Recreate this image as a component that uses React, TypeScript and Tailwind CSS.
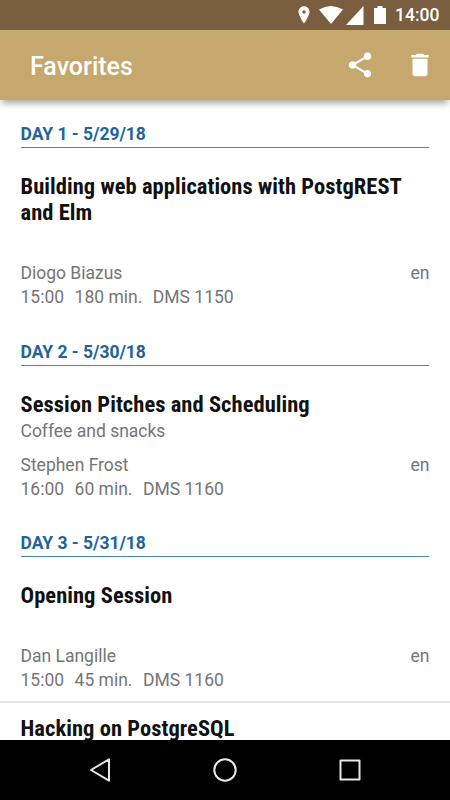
import React from 'react';

interface Session {
    title: string;
    subtitle?: string;
    speaker: string;
    time: string;
    duration: string;
    room: string;
    lang: string;
}

interface Day {
    label: string;
    sessions: Session[];
}

const days: Day[] = [
    {
        label: 'DAY 1 - 5/29/18',
        sessions: [
            {
                title: 'Building web applications with PostgREST and Elm',
                speaker: 'Diogo Biazus',
                time: '15:00',
                duration: '180 min.',
                room: 'DMS 1150',
                lang: 'en',
            },
        ],
    },
    {
        label: 'DAY 2 - 5/30/18',
        sessions: [
            {
                title: 'Session Pitches and Scheduling',
                subtitle: 'Coffee and snacks',
                speaker: 'Stephen Frost',
                time: '16:00',
                duration: '60 min.',
                room: 'DMS 1160',
                lang: 'en',
            },
        ],
    },
    {
        label: 'DAY 3 - 5/31/18',
        sessions: [
            {
                title: 'Opening Session',
                speaker: 'Dan Langille',
                time: '15:00',
                duration: '45 min.',
                room: 'DMS 1160',
                lang: 'en',
            },
        ],
    },
];

const nextTitle = 'Hacking on PostgreSQL';

const StatusBar: React.FC = () => (
    <div className="h-[30px] shrink-0 bg-[#7b5d3f] flex items-center justify-end pr-[10.500px] text-white">
        <svg className="w-[12px] h-[18px] mr-[9px]" viewBox="0 0 12 18" fill="currentColor">
            <path fillRule="evenodd" d="M6 .3C2.900.3.500 2.700.500 5.800.500 10 6 17.600 6 17.600S11.500 10 11.500 5.800C11.500 2.700 9.100.3 6 .3zM6 4.300a1.700 1.700 0 1 1 0 3.400 1.700 1.700 0 0 1 0-3.400z" />
        </svg>
        <svg className="w-[24px] h-[18px] mr-[3px]" viewBox="0 0 24 18" fill="currentColor">
            <path d="M12 18L24 3.500Q12-3.500 0 3.500z" />
        </svg>
        <svg className="w-[18px] h-[19px] mr-[10px]" viewBox="0 0 18 19" fill="currentColor">
            <path d="M17.500 0v19H0z" />
        </svg>
        <svg className="w-[12px] h-[18px] mr-[9px]" viewBox="0 0 12 18" fill="currentColor">
            <path d="M3.500 0h5v2H12v16H0V2h3.500z" />
        </svg>
        <span className="text-[17.500px] font-medium leading-none pt-[2px]">14:00</span>
    </div>
);

const AppBar: React.FC = () => (
    <header className="relative z-10 h-[70px] shrink-0 bg-[#c6a76e] shadow-[0_5px_7px_-2px_rgba(0,0,0,0.38)] flex items-center pl-[30px] pr-[15px] text-white">
        <h1 className="flex-1 pt-[3px] text-[25px] font-medium">Favorites</h1>
        <button className="mr-[30px]" aria-label="Share">
            <svg className="w-[30px] h-[30px]" viewBox="0 0 24 24" fill="currentColor">
                <path d="M18 16.080c-.76 0-1.440.3-1.960.77L8.910 12.700c.05-.23.09-.46.09-.7s-.04-.47-.09-.7l7.050-4.110c.54.5 1.250.81 2.040.81 1.660 0 3-1.340 3-3s-1.340-3-3-3-3 1.340-3 3c0 .24.04.47.09.7L8.040 9.810C7.500 9.310 6.790 9 6 9c-1.660 0-3 1.340-3 3s1.340 3 3 3c.79 0 1.500-.31 2.040-.81l7.120 4.160c-.05.21-.08.43-.08.65 0 1.610 1.310 2.920 2.920 2.920s2.920-1.310 2.920-2.920-1.310-2.920-2.920-2.920z" />
            </svg>
        </button>
        <button aria-label="Delete">
            <svg className="w-[30px] h-[30px]" viewBox="0 0 24 24" fill="currentColor">
                <path d="M6 19c0 1.100.9 2 2 2h8c1.100 0 2-.9 2-2V7H6v12zM19 4h-3.500l-1-1h-5l-1 1H5v2h14V4z" />
            </svg>
        </button>
    </header>
);

const SessionTitle: React.FC<{ children: string }> = ({ children }) => (
    <h3 className="font-bold [font-stretch:75%] text-[22.500px] leading-[26px] tracking-[0.050px] text-[#111]">{children}</h3>
);

const SessionItem: React.FC<{ session: Session }> = ({ session }) => (
    <article className="px-[20.500px] pt-[13px] pb-[9px]">
        <SessionTitle>{session.title}</SessionTitle>
        <p className="mt-px h-[27px] text-[17.500px] leading-[27px]">{session.subtitle}</p>
        <div className="mt-[8px] flex justify-between text-[17.500px] leading-[24px]">
            <span>{session.speaker}</span>
            <span>{session.lang}</span>
        </div>
        <div className="flex gap-[10.500px] text-[17.500px] leading-[24px]">
            <span>{session.time}</span>
            <span>{session.duration}</span>
            <span>{session.room}</span>
        </div>
    </article>
);

const NavigationBar: React.FC = () => (
    <nav className="h-[60px] shrink-0 bg-black flex items-center justify-center gap-[101px] text-[#e8e8e8]">
        <svg className="w-[24px] h-[26px]" viewBox="0 0 24 26" fill="none" stroke="currentColor" strokeWidth="2" strokeLinejoin="round">
            <path d="M21 2.300v21.400L3 13z" />
        </svg>
        <svg className="w-[24px] h-[24px]" viewBox="0 0 24 24" fill="none" stroke="currentColor" strokeWidth="2">
            <circle cx="12" cy="12" r="10.700" />
        </svg>
        <svg className="w-[24px] h-[24px]" viewBox="0 0 24 24" fill="none" stroke="currentColor" strokeWidth="2" strokeLinejoin="round">
            <path d="M2.500 2.500h19v19h-19z" />
        </svg>
    </nav>
);

export default function App() {
    return (
        <div className="w-[450px] h-[800px] overflow-hidden flex flex-col bg-white text-[#757575] font-[Roboto,sans-serif]">
            <StatusBar />
            <AppBar />
            <main className="flex-1 min-h-0 overflow-hidden">
                {days.map((day) => (
                    <section key={day.label} className="pt-[19.800px]">
                        <h2 className="ml-[20.500px] mr-[21px] h-[28px] border-b border-[#4a83b1] text-[17.500px] leading-[28px] tracking-[-0.030px] font-bold text-[#22649a]">
                            {day.label}
                        </h2>
                        <div className="pt-[12px]">
                            {day.sessions.map((session) => (
                                <SessionItem key={session.title} session={session} />
                            ))}
                        </div>
                    </section>
                ))}
                <div className="border-t-2 border-[#e5e5e5] px-[20.500px] pt-[12px]">
                    <SessionTitle>{nextTitle}</SessionTitle>
                </div>
            </main>
            <NavigationBar />
        </div>
    );
}
